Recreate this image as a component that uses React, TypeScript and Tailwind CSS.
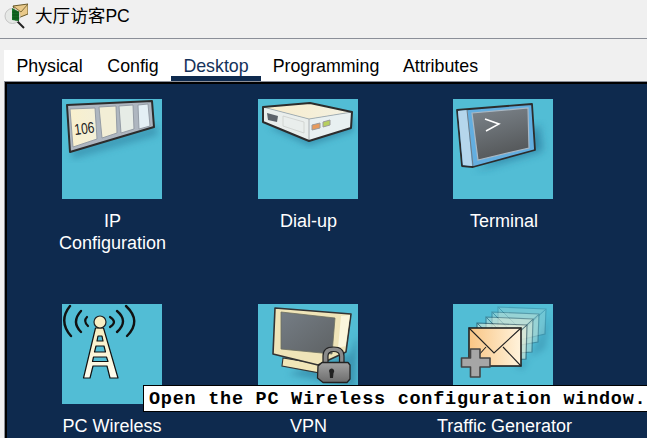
import React from "react";

function IpIcon() {
  return (
    <svg viewBox="0 0 100 100" className="h-full w-full">
      <defs>
        <linearGradient id="ipf" x1="0" y1="0" x2="1" y2="0">
          <stop offset="0" stopColor="#f9f0cd" />
          <stop offset="1" stopColor="#f3efd8" />
        </linearGradient>
        <filter id="ipb"><feGaussianBlur stdDeviation="3.5" /></filter>
      </defs>
      <polygon points="10,60 96,36 94,26 10,50" fill="#2f7f9e" opacity="0.55" filter="url(#ipb)" />
      <polygon points="5,6 90,2 92,28 8,53" fill="#aeb6c0" stroke="#2c2c2c" strokeWidth="2" strokeLinejoin="round" />
      <polygon points="8,10 33,9 35,40 11,48" fill="url(#ipf)" stroke="#8f96a0" strokeWidth="0.9" />
      <polygon points="37,8 54,7 55,34 40,39" fill="#f2eed6" stroke="#8f96a0" strokeWidth="0.9" />
      <polygon points="57,7 71,6 72,30 59,34" fill="#e6ece6" stroke="#8f96a0" strokeWidth="0.9" />
      <polygon points="76,6 86,5 88,27 77,30" fill="#e4eff5" stroke="#8f96a0" strokeWidth="0.9" />
      <text x="0" y="0" fontFamily="Liberation Sans" fontSize="15.5" fill="#222" transform="translate(13 36) rotate(-7) scale(0.78 1)">106</text>
    </svg>
  );
}

function DialIcon() {
  return (
    <svg viewBox="0 0 100 100" className="h-full w-full">
      <defs>
        <filter id="dib"><feGaussianBlur stdDeviation="3" /></filter>
        <linearGradient id="dit" x1="0" y1="0" x2="1" y2="0">
          <stop offset="0" stopColor="#f8eccb" />
          <stop offset="1" stopColor="#f3f1e2" />
        </linearGradient>
      </defs>
      <polygon points="10,28 51,47 96,32 94,18" fill="#2f7f9e" opacity="0.6" filter="url(#dib)" />
      <polygon points="5,8 52,4 94,13 51,20" fill="url(#dit)" />
      <polygon points="5,8 51,20 51,42 5,23" fill="#e9eeec" />
      <polygon points="51,20 94,13 93,29 51,42" fill="#e8f0f1" />
      <path d="M5,8 L51,20 L94,13 M51,20 V42" fill="none" stroke="#9aa0a5" strokeWidth="0.8" />
      <polygon points="5,8 52,4 94,13 93,29 51,42 5,23" fill="none" stroke="#2c2c2c" strokeWidth="2" strokeLinejoin="round" />
      <polygon points="9,14 20,17 19,23 10,21" fill="#5c636b" />
      <polygon points="25,17 46,23 46,34 25,27" fill="none" stroke="#cfd3d0" strokeWidth="0.9" />
      <polygon points="54,26 62,24 62,29 54,31" fill="#e79a5b" stroke="#9a9a9a" strokeWidth="1" />
      <polygon points="65,23 72,21 72,26 65,28" fill="#b6cf5e" stroke="#9a9a9a" strokeWidth="1" />
    </svg>
  );
}

function TerminalIcon() {
  return (
    <svg viewBox="0 0 100 100" className="h-full w-full">
      <defs>
        <filter id="teb"><feGaussianBlur stdDeviation="4" /></filter>
        <linearGradient id="tes" x1="0" y1="0" x2="0.3" y2="1">
          <stop offset="0" stopColor="#7d858c" />
          <stop offset="1" stopColor="#55585a" />
        </linearGradient>
      </defs>
      <polygon points="22,72 90,52 86,25 40,60" fill="#226c92" opacity="0.6" filter="url(#teb)" />
      <polygon points="4,11 79,5 82,51 20,68 9,67" fill="#63aee0" stroke="#2c2c2c" strokeWidth="1.8" strokeLinejoin="round" />
      <polygon points="5,12 14,11 19,67 10,66" fill="#b5d6ec" />
      <line x1="14" y1="11" x2="20" y2="67" stroke="#6f7d88" strokeWidth="1" />
      <polygon points="19,14 75,9 76,49 25,61" fill="url(#tes)" stroke="#a9b8c4" strokeWidth="1.2" />
      <path d="M32,20 L46,25 L33,32" fill="none" stroke="#fff" strokeWidth="1.5" />
    </svg>
  );
}

function TowerIcon() {
  return (
    <svg viewBox="0 0 100 100" className="h-full w-full">
      <defs>
        <linearGradient id="tof" x1="0" y1="0" x2="0" y2="1">
          <stop offset="0" stopColor="#f6edc0" />
          <stop offset="1" stopColor="#fffdf0" />
        </linearGradient>
      </defs>
      <g fill="none" stroke="#111" strokeLinecap="round">
        <path d="M8,2 Q-4,17 9,32" strokeWidth="2.4" />
        <path d="M19,7 Q9,18 19,28" strokeWidth="2.4" />
        <path d="M25,13 Q21,17 26,22" strokeWidth="2.2" />
        <path d="M64,2 Q80,17 65,32" strokeWidth="2.4" />
        <path d="M55,7 Q67,17 55,28" strokeWidth="2.4" />
        <path d="M48,13 Q56,18 48,23" strokeWidth="2.2" />
      </g>
      <path
        d="M33.5,24 L21.5,74 H28 L31,62 H45 L48,74 H56 L41.5,24 Z M36,32 H40 L41,37 H35 Z M34,42 H42 L43.5,48 H32.5 Z M31.5,53 H44.5 L46,57.5 H30.5 Z"
        fill="url(#tof)"
        stroke="#111"
        strokeWidth="1.2"
        fillRule="evenodd"
        strokeLinejoin="round"
      />
      <circle cx="38" cy="18" r="6" fill="#f8efc4" stroke="#222" strokeWidth="1.2" />
    </svg>
  );
}

function VpnIcon() {
  return (
    <svg viewBox="0 0 100 100" className="h-full w-full">
      <defs>
        <filter id="vpb"><feGaussianBlur stdDeviation="3" /></filter>
        <linearGradient id="vps" x1="0" y1="0" x2="1" y2="1">
          <stop offset="0" stopColor="#757d85" />
          <stop offset="1" stopColor="#5e6264" />
        </linearGradient>
        <linearGradient id="vpl" x1="0" y1="0" x2="0" y2="1">
          <stop offset="0" stopColor="#a2a2a2" />
          <stop offset="1" stopColor="#6c6c6c" />
        </linearGradient>
      </defs>
      <polygon points="30,70 98,84 100,30 92,50" fill="#2f7f9e" opacity="0.6" filter="url(#vpb)" />
      <polygon points="25,54 62,60 62,69 24,62" fill="#f1e6b8" stroke="#333" strokeWidth="1.1" />
      <polygon points="17,4 93,10 88,48 60,61 15,50" fill="#efe4b8" stroke="#333" strokeWidth="1.6" strokeLinejoin="round" />
      <polygon points="83,12 92,11 87.5,42 80,44" fill="#fbf6dc" />
      <polygon points="23,8 77,14 74,50 23,45" fill="url(#vps)" stroke="#6c6f60" strokeWidth="0.8" />
      <path d="M65,62 V52 Q65,43 75.5,43 Q86,43 86,52 V62 H81.5 V52 Q81.5,47.5 75.5,47.5 Q70,47.5 70,52 V62 Z" fill="#8a8a8a" stroke="#222" strokeWidth="1.2" strokeLinejoin="round" />
      <path d="M60,62 L64,58.5 H90 L92,61 V75 L89,78.5 H65 L59.5,74 Z" fill="url(#vpl)" stroke="#222" strokeWidth="1.3" strokeLinejoin="round" />
      <path d="M71,67 a2.6,2.6 0 1 1 4.5,2 L75,74 H72 L71.6,69 Z" fill="#222" />
    </svg>
  );
}

function TrafficIcon() {
  const ghost = [
    { l: 45, t: 3, r: 93, rb: 30, o: 0.2 },
    { l: 39, t: 8, r: 86, rb: 38, o: 0.3 },
    { l: 33, t: 13, r: 80, rb: 48, o: 0.4 },
    { l: 24, t: 19, r: 74, rb: 55, o: 0.55 },
  ];
  return (
    <svg viewBox="0 0 100 100" className="h-full w-full">
      <defs>
        <linearGradient id="trf" x1="0" y1="0" x2="1" y2="0">
          <stop offset="0" stopColor="#f9c584" />
          <stop offset="1" stopColor="#fff3dc" />
        </linearGradient>
        <filter id="trb"><feGaussianBlur stdDeviation="3" /></filter>
      </defs>
      <polygon points="60,62 92,45 98,10 70,66" fill="#2f7f9e" opacity="0.4" filter="url(#trb)" />
      {ghost.map((g) => (
        <g key={g.l} opacity={g.o}>
          <polygon points={`${g.l},${g.t} ${g.r},${g.t + 2} ${g.r - 1},${g.rb} ${g.l},${g.t + 38}`} fill="#eef0d8" stroke="#1d3a4a" strokeWidth="1.2" />
          <path d={`M${g.l},${g.t} L${(g.l + g.r) / 2},${g.t + 24} L${g.r},${g.t + 2}`} fill="none" stroke="#1d3a4a" strokeWidth="1" />
        </g>
      ))}
      <rect x="16" y="24" width="52" height="38" fill="url(#trf)" stroke="#222" strokeWidth="1.6" />
      <path d="M16,24 L41,49 L68,24 M16,62 L33,43 M68,62 L50,43" fill="none" stroke="#222" strokeWidth="1.1" />
      <path d="M17.5,45 H27 V54 H37 V63 H27 V73 H17.5 V63 H8.5 V54 H17.5 Z" fill="#a6a6a6" stroke="#444" strokeWidth="1.6" strokeLinejoin="round" />
    </svg>
  );
}

function AppIcon() {
  return (
    <svg viewBox="0 0 24 26" className="h-[26px] w-[24px]">
      <polygon points="9,3 24,1 24,11 14,15" fill="#e9c98a" stroke="#6b5a2a" strokeWidth="1" />
      <path d="M9,3 L17,9 L24,1" fill="none" stroke="#6b5a2a" strokeWidth="0.8" />
      <line x1="13" y1="18" x2="20" y2="25" stroke="#222" strokeWidth="2" />
      <circle cx="8.5" cy="13" r="7.5" fill="#e6e8e6" stroke="#c4c4c4" strokeWidth="1" />
      <polygon points="8,5 15,9 15,18 8,17" fill="#167a2b" />
      <path d="M10,6 V17 M12,7 V18 M14,8 V18 M8,9 H15 M8,12 H15 M8,15 H15" stroke="#0b3f12" strokeWidth="0.6" />
    </svg>
  );
}

const tabs = [
  { t: "Physical", w: "w-[91px]" },
  { t: "Config", w: "w-[76px]" },
  { t: "Desktop", w: "w-[90px]" },
  { t: "Programming", w: "w-[130px]" },
  { t: "Attributes", w: "w-[99px]" },
];
const tiles = [
  { icon: <IpIcon />, label: ["IP", "Configuration"], pad: "pl-[1px]" },
  { icon: <DialIcon />, label: ["Dial-up"], pad: "pl-[2px]" },
  { icon: <TerminalIcon />, label: ["Terminal"], pad: "pl-[2px]" },
  { icon: <TowerIcon />, label: ["PC Wireless"], pad: "pl-0" },
  { icon: <VpnIcon />, label: ["VPN"], pad: "pl-[2px]" },
  { icon: <TrafficIcon />, label: ["Traffic Generator"], pad: "pl-[3px]" },
];

export default function App() {
  return (
    <div className="relative flex h-[438px] w-[647px] flex-col overflow-hidden bg-[#f0f0f0] font-['Liberation_Sans',sans-serif]">
      <div className="flex h-[39px] shrink-0 items-center gap-[7px] border-b border-[#8b8f98] pb-[7px] pl-[4px]">
        <AppIcon />
        <span className="text-[17.6px] leading-[22px] text-black font-['Liberation_Sans','Noto_Sans_CJK_SC',sans-serif]">大厅访客PC</span>
      </div>
      <div className="ml-[4px] mt-[11px] flex h-[31px] w-[486px] shrink-0 bg-white">
        {tabs.map(({ t, w }) => (
          <div
            key={t}
            className={
              t === "Desktop"
                ? `${w} h-full border-b-[5px] border-[#0e2a4e] pt-[5px] text-center text-[17.8px] leading-[22px] text-[#14325a]`
                : `${w} h-full pt-[5px] text-center text-[17.8px] leading-[22px] text-black`
            }
          >
            {t}
          </div>
        ))}
      </div>
      <div className="ml-[4px] flex-1 border-l border-t border-[#8b8f98]">
        <div className="h-full border-l-2 border-t-2 border-black bg-[#0e2a4e] pt-[15px]">
          <div className="grid grid-cols-[196px_195px_196px] auto-rows-[205px] pl-[7px]">
            {tiles.map((t) => (
              <div key={t.label.join()} className="flex flex-col items-center">
                <div className="h-[100px] w-[100px] bg-[#52bdd5]">{t.icon}</div>
                <div className={`${t.pad} mt-[11px] text-center text-[18px] leading-[22px] text-white`}>
                  {t.label.map((l) => (
                    <div key={l}>{l}</div>
                  ))}
                </div>
              </div>
            ))}
          </div>
        </div>
      </div>
      <div className="absolute left-[143px] top-[385px] h-[27px] w-[510px] whitespace-nowrap border border-black bg-white pl-[5px] pt-[1px] text-[18.5px] font-bold leading-[25px] tracking-[0.74px] text-black font-['Liberation_Mono',monospace]">
        Open the PC Wireless configuration window.
      </div>
    </div>
  );
}
